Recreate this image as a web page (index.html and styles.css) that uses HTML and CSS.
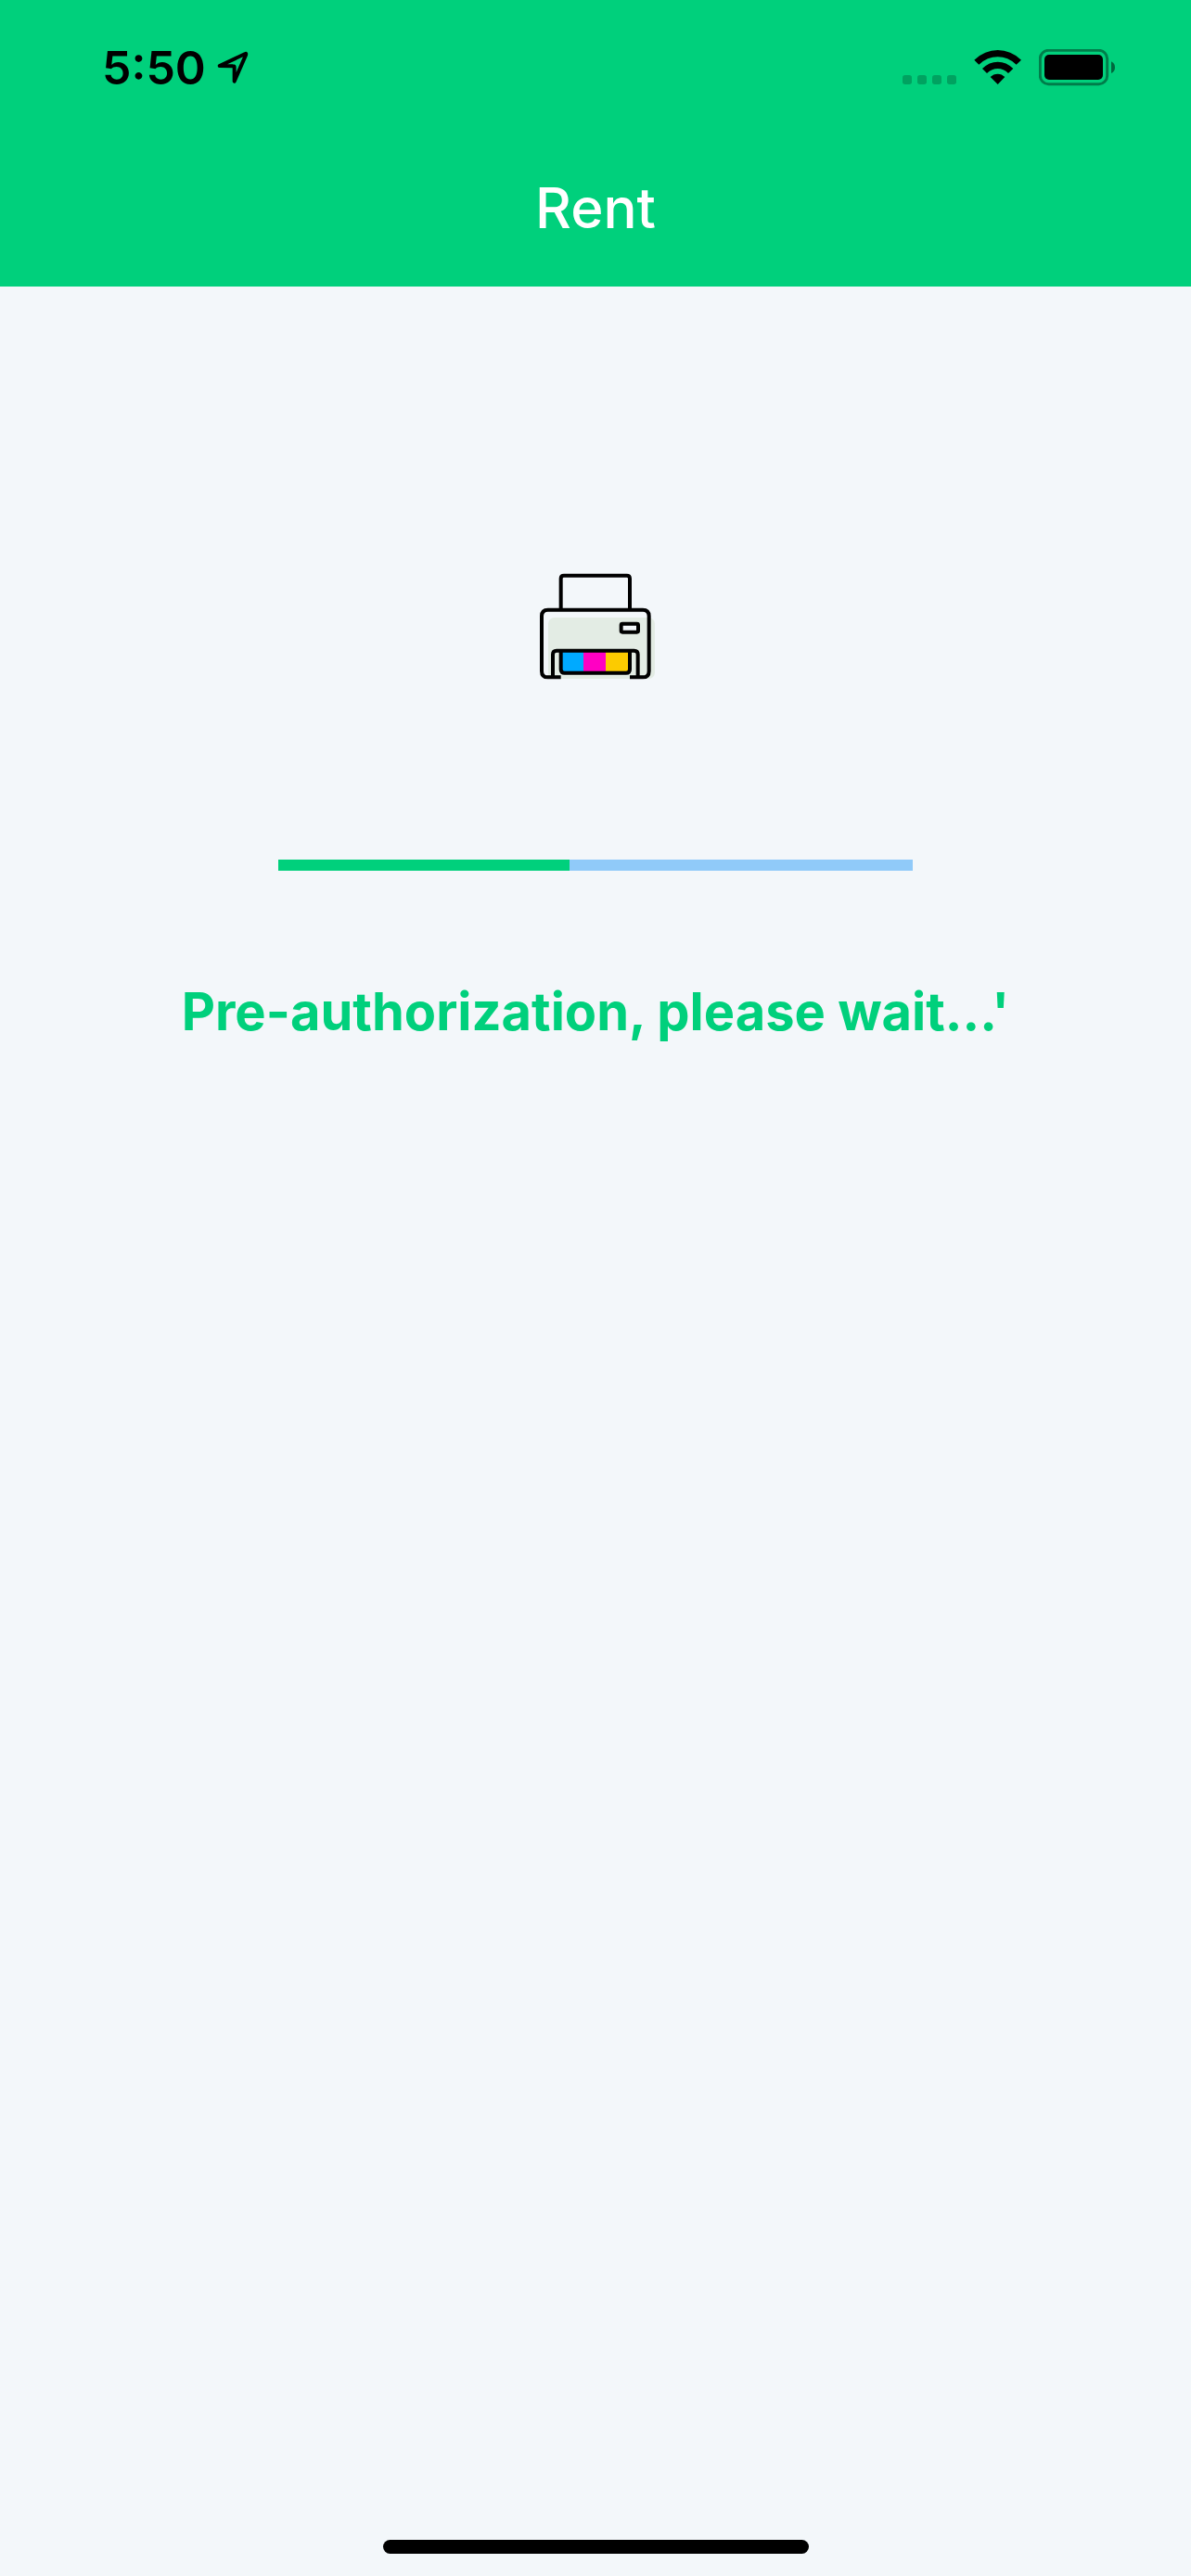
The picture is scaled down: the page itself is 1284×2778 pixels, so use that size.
FILE: index.html
```html
<!DOCTYPE html>
<html lang="en">
<head>
<meta charset="utf-8">
<meta name="viewport" content="width=device-width, initial-scale=1">
<title>Rent</title>
<link rel="stylesheet" href="styles.css">
</head>
<body>
<header class="header">
  <div class="status-bar">
    <div class="status-left">
      <span class="clock">5:50</span>
      <svg class="location" viewBox="430 74 100 108" aria-hidden="true">
        <path d="M437 122L520 83Q524 81 522 87L485 172V127Q485 123 480 123Z" fill="none" stroke="#000" stroke-width="12" stroke-linejoin="round"/>
      </svg>
    </div>
    <div class="status-right">
      <svg class="signal" viewBox="69 69 174 120" aria-hidden="true">
        <g fill="#000" fill-opacity=".22">
          <rect x="69" y="153" width="30" height="30" rx="8"/>
          <rect x="117" y="153" width="30" height="30" rx="8"/>
          <rect x="165" y="153" width="30" height="30" rx="8"/>
          <rect x="213" y="153" width="30" height="30" rx="8"/>
        </g>
      </svg>
      <svg class="wifi" viewBox="300 69 153 120" aria-hidden="true">
        <path d="M301 104Q335 72 377 72Q419 72 453 104L437 119Q410 94 377 94Q343 94 316 119Z"/>
        <path d="M327 132Q349 110 377 110Q405 110 427 132L411 147Q396 132 377 132Q358 132 342 147Z"/>
        <path d="M353 159Q363 149 377 149Q390 149 400 159L377 183Z"/>
      </svg>
      <svg class="battery" viewBox="510 69 246 120" aria-hidden="true">
        <rect x="514" y="73" width="217" height="109" rx="27" fill="none" stroke="#000" stroke-opacity=".4" stroke-width="9"/>
        <rect x="528" y="87" width="189" height="81" rx="15"/>
        <path d="M744 109Q756 115 756 128Q756 141 744 147Z" fill-opacity=".5"/>
      </svg>
    </div>
  </div>
  <h1 class="title">Rent</h1>
</header>
<main class="content">
  <svg class="printer" viewBox="21 45 390 360" role="img" aria-label="Printer">
    <rect x="63" y="198" width="345" height="198" rx="20" fill="#e3ece4"/>
    <path d="M104 173V72Q104 62 114 62H317Q327 62 327 72V173" fill="#f3f7fa" stroke="#000" stroke-width="12"/>
    <path d="M104 391H62Q42 391 42 371V193Q42 173 62 173H369Q389 173 389 193V371Q389 391 369 391H327" fill="none" stroke="#000" stroke-width="12"/>
    <rect x="299" y="218" width="55" height="27" rx="4" fill="#f3f7fa" stroke="#000" stroke-width="12"/>
    <path d="M104 305H178V377H114Q104 377 104 367Z" fill="#00aaff"/>
    <path d="M177 305H249V377H177Z" fill="#ff00c3"/>
    <path d="M249 305H327V367Q327 377 317 377H249Z" fill="#fccb00"/>
    <path d="M104 305V365Q104 377 116 377H315Q327 377 327 365V305M78 391V317Q78 305 90 305H341Q353 305 353 317V391" fill="none" stroke="#000" stroke-width="12"/>
  </svg>
  <progress class="progress" value="314" max="684" aria-labelledby="message"></progress>
  <p class="message" id="message">Pre-authorization, please wait...'</p>
</main>
<footer class="footer"><div class="home-bar"></div></footer>
</body>
</html>
```
FILE: styles.css
```css
* {
  box-sizing: border-box;
}

body {
  margin: 0;
  min-height: 100vh;
  display: flex;
  flex-direction: column;
  background: #f3f7fa;
  font-family: Inter, "Liberation Sans", sans-serif;
}

.header {
  background: #00d07c;
}

.status-bar {
  height: 146px;
  padding: 0 82px 0 110px;
  display: flex;
  align-items: center;
  justify-content: space-between;
}

.status-left {
  display: flex;
  align-items: center;
  gap: 12px;
}

.status-right {
  display: flex;
  gap: 19px;
}

.clock {
  font-size: 50px;
  line-height: 60px;
  font-weight: 600;
}

.location {
  width: 34px;
  height: 36px;
}

.signal {
  width: 58px;
  height: 40px;
}

.wifi {
  width: 51px;
  height: 40px;
}

.battery {
  width: 82px;
  height: 40px;
}

.title {
  margin: 0;
  padding: 42px 0 49px;
  color: #fff;
  font-size: 60px;
  line-height: 72px;
  font-weight: 500;
  text-align: center;
}

.content {
  flex: 1;
  padding-top: 306px;
  display: flex;
  flex-direction: column;
  align-items: center;
}

.printer {
  width: 130px;
  height: 120px;
}

.progress {
  appearance: none;
  width: 684px;
  max-width: 100%;
  height: 12px;
  margin: 192px 0 120px;
  border: 0;
  background: #90caf9;
}

.progress::-webkit-progress-bar {
  background: #90caf9;
}

.progress::-webkit-progress-value {
  background: #00d07c;
}

.message {
  margin: 0;
  color: #00d07c;
  font-size: 56px;
  line-height: 64px;
  font-weight: 700;
  text-align: center;
}

.footer {
  padding-bottom: 24px;
  display: flex;
  justify-content: center;
}

.home-bar {
  width: 459px;
  height: 15px;
  border-radius: 8px;
  background: #000;
}
```
